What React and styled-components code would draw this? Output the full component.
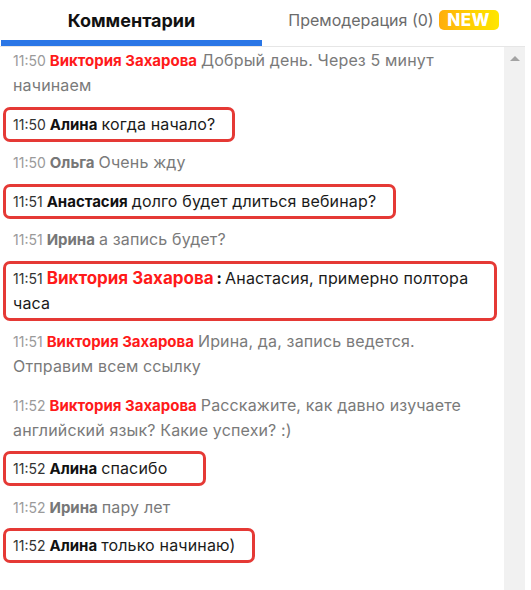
import React from "react";
import styled, { createGlobalStyle } from "styled-components";

const GlobalStyle = createGlobalStyle`
  html, body {
    margin: 0;
    padding: 0;
    background: #fff;
  }
  body {
    font-family: Inter, "Noto Sans", "Liberation Sans", sans-serif;
  }
`;

const messages = [
  { time: "11:50", name: "Виктория Захарова", admin: true, text: "Добрый день. Через 5 минут начинаем" },
  { time: "11:50", name: "Алина", text: "когда начало?", marked: true },
  { time: "11:50", name: "Ольга", text: "Очень жду" },
  { time: "11:51", name: "Анастасия", text: "долго будет длиться вебинар?", marked: true },
  { time: "11:51", name: "Ирина", text: "а запись будет?" },
  { time: "11:51", name: "Виктория Захарова", admin: true, text: "Анастасия, примерно полтора часа", marked: true, colon: true },
  { time: "11:51", name: "Виктория Захарова", admin: true, text: "Ирина, да, запись ведется. Отправим всем ссылку" },
  { time: "11:52", name: "Виктория Захарова", admin: true, text: "Расскажите, как давно изучаете английский язык? Какие успехи? :)" },
  { time: "11:52", name: "Алина", text: "спасибо", marked: true, extra: 19 },
  { time: "11:52", name: "Ирина", text: "пару лет" },
  { time: "11:52", name: "Алина", text: "только начинаю)", marked: true },
];

const Page = styled.div`
  width: 525px;
  height: 590px;
  display: flex;
  flex-direction: column;
  overflow: hidden;
`;

const Tabs = styled.div`
  display: flex;
  height: 46px;
  border-bottom: 1px solid #e6e6e6;
  width: 531px;
`;

const Tab = styled.div`
  width: ${(p) => p.$width}px;
  margin-left: ${(p) => p.$offset || 0}px;
  display: flex;
  align-items: center;
  justify-content: center;
  gap: 5px;
  padding-top: 6px;
  padding-bottom: 6px;
  box-sizing: border-box;
  font-size: ${(p) => (p.$active ? "18px" : "16px")};
  font-weight: ${(p) => (p.$active ? 700 : 400)};
  color: ${(p) => (p.$active ? "#111" : "#6b6b6b")};
  border-bottom: 6px solid ${(p) => (p.$active ? "#2a76e6" : "transparent")};
`;

const NewBadge = styled.span`
  display: inline-flex;
  align-items: center;
  justify-content: center;
  width: 60px;
  height: 20px;
  border-radius: 5px;
  background: linear-gradient(90deg, #ffad0d 0%, #ffd400 60%, #ffe600 100%);
  color: #fff;
  font-weight: 800;
  font-size: 17px;
  letter-spacing: 0.5px;
`;

const Body = styled.div`
  flex: 1;
  display: flex;
`;

const List = styled.div`
  flex: 1;
  display: flex;
  flex-direction: column;
  align-items: flex-start;
  gap: 3.5px;
  margin-top: -4px;
  padding-left: 3px;
`;

const Message = styled.div`
  box-sizing: border-box;
  max-width: 494px;
  width: ${(p) => (p.$marked ? "fit-content" : "100%")};
  border: 3px solid ${(p) => (p.$marked ? "#e53935" : "transparent")};
  border-radius: 7px;
  padding: 2px ${(p) => 17 + (p.$extra || 0)}px 2px 7px;
  line-height: 25px;
  font-size: 16px;
  letter-spacing: 0.15px;
  color: ${(p) => (p.$marked ? "#1a1a1a" : "#7a7a7a")};
`;

const Time = styled.span`
  font-size: 14px;
  letter-spacing: 0;
  color: ${(p) => (p.$marked ? "#333" : "#9a9a9a")};
  margin-right: 4px;
`;

const Name = styled.span`
  font-weight: 700;
  letter-spacing: 0;
  font-size: ${(p) => (p.$big ? "17px" : "15px")};
  color: ${(p) => (p.$admin ? "#ff1a1a" : p.$marked ? "#111" : "#777")};
  margin-right: ${(p) => (p.$big ? 3 : 4)}px;
`;

const Colon = styled.span`
  font-weight: 700;
  color: #111;
  margin-right: 3px;
`;

const Track = styled.div`
  width: 21px;
  background: #f1f1f1;
  display: flex;
  justify-content: center;
  padding-top: 9px;
  box-sizing: border-box;
`;

const Arrow = styled.div`
  width: 0;
  height: 0;
  border-left: 5px solid transparent;
  border-right: 5px solid transparent;
  border-bottom: 5px solid #a3a3a3;
`;

export default function App() {
  return (
    <Page>
      <GlobalStyle />
      <Tabs>
        <Tab $active $width={261} $offset={1}>Комментарии</Tab>
        <Tab $width={263}>
          Премодерация (0) <NewBadge>NEW</NewBadge>
        </Tab>
      </Tabs>
      <Body>
        <List>
          {messages.map((m, i) => (
            <Message key={i} $marked={m.marked} $extra={m.extra}>
              <Time $marked={m.marked}>{m.time}</Time>
              <Name $admin={m.admin} $marked={m.marked} $big={m.colon}>
                {m.name}
              </Name>
              {m.colon && <Colon>:</Colon>}
              {m.text}
            </Message>
          ))}
        </List>
        <Track>
          <Arrow />
        </Track>
      </Body>
    </Page>
  );
}
